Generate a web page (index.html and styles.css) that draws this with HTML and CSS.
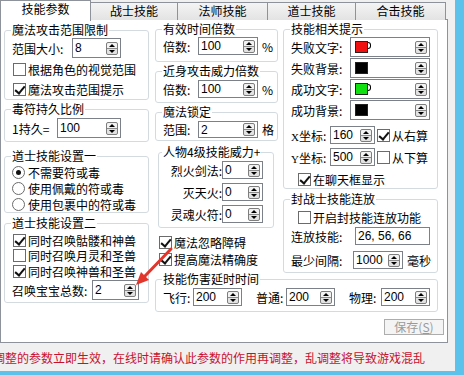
FILE: index.html
```html
<!DOCTYPE html>
<html lang="zh-CN">
<head>
<meta charset="utf-8">
<title>技能参数</title>
<link rel="stylesheet" href="styles.css">
</head>
<body>
<div class="dialog">
  <div class="tabs">
    <div class="tab active t1">技能参数</div>
    <div class="tab t2">战士技能</div>
    <div class="tab t3">法师技能</div>
    <div class="tab t4">道士技能</div>
    <div class="tab t5">合击技能</div>
  </div>

  <div class="panel">
    <div class="grid">
      <!-- left column -->
      <div class="col left">
        <fieldset class="g-l1">
          <legend>魔法攻击范围限制</legend>
          <div class="row h20 mt2"><span class="lbl w61">范围大小:</span><span class="field w49"><span class="val">8</span><span class="spin"></span></span></div>
          <div class="row h22"><span class="box"></span>根据角色的视觉范围</div>
          <div class="row h19"><span class="box on"></span>魔法攻击范围提示</div>
        </fieldset>
        <fieldset class="g-l2">
          <legend>毒符持久比例</legend>
          <div class="row h20 mt3"><span class="lbl w46">1持久=</span><span class="field w64"><span class="val">100</span><span class="spin"></span></span></div>
        </fieldset>
        <fieldset class="g-l3">
          <legend>道士技能设置一</legend>
          <div class="row h16 mt2"><span class="radio on"></span>不需要符或毒</div>
          <div class="row h16"><span class="radio"></span>使用佩戴的符或毒</div>
          <div class="row h16"><span class="radio"></span>使用包裹中的符或毒</div>
        </fieldset>
        <fieldset class="g-l4">
          <legend>道士技能设置二</legend>
          <div class="row h16 mt3"><span class="box on"></span>同时召唤骷髅和神兽</div>
          <div class="row h15"><span class="box"></span>同时召唤月灵和圣兽</div>
          <div class="row h16"><span class="box on"></span>同时召唤神兽和圣兽</div>
          <div class="row h20 mt1"><span class="lbl w81">召唤宝宝总数:</span><span class="field w47"><span class="val">2</span><span class="spin"></span></span></div>
        </fieldset>
      </div>

      <!-- middle column -->
      <div class="col mid">
        <fieldset class="g-m1">
          <legend>有效时间倍数</legend>
          <div class="row h18 mt2"><span class="lbl w36">倍数:</span><span class="field w60"><span class="val">100</span><span class="spin"></span></span><span class="unit">%</span></div>
        </fieldset>
        <fieldset class="g-m2">
          <legend>近身攻击威力倍数</legend>
          <div class="row h18 mt3"><span class="lbl w36">倍数:</span><span class="field w60"><span class="val">100</span><span class="spin"></span></span><span class="unit">%</span></div>
        </fieldset>
        <fieldset class="g-m3">
          <legend>魔法锁定</legend>
          <div class="row h17 mt3"><span class="lbl w36">范围:</span><span class="field w60"><span class="val">2</span><span class="spin"></span></span><span class="unit">格</span></div>
        </fieldset>
        <fieldset class="g-m4">
          <legend>人物4级技能威力+</legend>
          <div class="row h18 mt3"><span class="lbl w60 right">烈火剑法:</span><span class="field w41"><span class="val">0</span><span class="spin"></span></span></div>
          <div class="row h18 mt4"><span class="lbl w60 right">灭天火:</span><span class="field w41"><span class="val">0</span><span class="spin"></span></span></div>
          <div class="row h18 mt4"><span class="lbl w60 right">灵魂火符:</span><span class="field w41"><span class="val">0</span><span class="spin"></span></span></div>
        </fieldset>
        <div class="row h17 mt6 ind2"><span class="box on"></span>魔法忽略障碍</div>
        <div class="row h17 ind2"><span class="box on"></span>提高魔法精确度</div>
      </div>

      <!-- right column -->
      <div class="col right">
        <fieldset class="g-r1">
          <legend>技能相关提示</legend>
          <div class="row h20 mt2"><span class="lbl w60 pl3">失败文字:</span><span class="field color w80"><span class="swatch red"></span><span class="tick"></span><span class="spin"></span></span></div>
          <div class="row h20 mt1"><span class="lbl w60 pl3">失败背景:</span><span class="field color w80"><span class="swatch black"></span><span class="spin"></span></span></div>
          <div class="row h20 mt1"><span class="lbl w60 pl3">成功文字:</span><span class="field color w80"><span class="swatch green"></span><span class="tick"></span><span class="spin"></span></span></div>
          <div class="row h20 mt1"><span class="lbl w60 pl3">成功背景:</span><span class="field color w80"><span class="swatch black"></span><span class="spin"></span></span></div>
          <div class="row h18 mt6"><span class="lbl w40 pl5"><span class="xy">X</span>坐标:</span><span class="field w45"><span class="val">160</span><span class="spin"></span></span><span class="box on ml3"></span>从右算</div>
          <div class="row h18 mt4"><span class="lbl w40 pl5"><span class="xy">Y</span>坐标:</span><span class="field w45"><span class="val">500</span><span class="spin"></span></span><span class="box ml3"></span>从下算</div>
          <div class="row h16 mt5 ind6"><span class="box on"></span>在聊天框显示</div>
        </fieldset>
        <fieldset class="g-r2">
          <legend>封战士技能连放</legend>
          <div class="row h17 mt4 ind6"><span class="box"></span>开启封技能连放功能</div>
          <div class="row h18 mt1"><span class="lbl w65 pl2">连放技能:</span><span class="field w75"><span class="val">26, 56, 66</span></span></div>
          <div class="row h18 mt6"><span class="lbl w63 pl2">最少间隔:</span><span class="field w50"><span class="val">1000</span><span class="spin"></span></span><span class="unit ml5">毫秒</span></div>
        </fieldset>
      </div>

      <!-- wide bottom group -->
      <fieldset class="wide">
        <legend>技能伤害延时时间</legend>
        <div class="row h18 mt3">
          <span class="lbl w31 pl3">飞行:</span><span class="field w49"><span class="val">200</span><span class="spin"></span></span>
          <span class="lbl w31 ml13">普通:</span><span class="field w49"><span class="val">200</span><span class="spin"></span></span>
          <span class="lbl w33 ml13">物理:</span><span class="field w49"><span class="val">200</span><span class="spin"></span></span>
        </div>
      </fieldset>
    </div>

    <div class="actions">
      <button class="save" disabled>保存(<u>S</u>)</button>
    </div>
  </div>

  <div class="notice">调整的参数立即生效，在线时请确认此参数的作用再调整，乱调整将导致游戏混乱</div>

  <svg class="arrow" width="464" height="375" viewBox="0 0 464 375" aria-hidden="true">
    <line x1="171" y1="249" x2="145" y2="276" stroke="#e2352b" stroke-width="3" stroke-linecap="round"/>
    <polygon points="136,285 141,272 149,280" fill="#e2352b"/>
  </svg>
</div>
</body>
</html>
```

FILE: styles.css
```css
* { box-sizing: border-box; }

body {
  margin: 0;
  background: #5bc2ec;
  font-family: "Noto Sans CJK SC", "Noto Sans", sans-serif;
  font-size: 12px;
  color: #000;
}

.dialog {
  position: relative;
  width: 455px;
  height: 371px;
  background: #f0f0f0;
  overflow: hidden;
}

/* ---------- tabs ---------- */
.tabs {
  display: flex;
  align-items: flex-end;
  height: 20px;
}
.tab {
  height: 18px;
  margin-left: -1px;
  border: 1px solid #8e929b;
  border-bottom: none;
  background: linear-gradient(#f4f4f4, #e3e3e3);
  text-align: center;
  line-height: 15px;
}
.tab.active {
  position: relative;
  z-index: 1;
  height: 21px;
  margin-left: 0;
  margin-bottom: -1px;
  background: #fff;
  line-height: 16px;
}
.t1 { width: 91px; }
.t2 { width: 88px; }
.t3 { width: 91px; }
.t4 { width: 89px; }
.t5 { width: 91px; }

/* ---------- panel ---------- */
.panel {
  width: 448px;
  height: 324px;
  margin-top: -1px;
  border: 1px solid #8e929b;
  background: #fff;
  padding: 3px 0 0 3px;
}

.grid {
  display: grid;
  grid-template-columns: 146px 123px 155px;
  column-gap: 5px;
  align-items: start;
}
.col { display: flex; flex-direction: column; }
.col.left { grid-row: 1 / 3; margin-top: 1px; width: 145px; }
.wide { grid-column: 2 / 4; }

fieldset {
  margin: 0;
  min-width: 0;
  padding: 0 4px 0 6px;
  border: 1px solid #d3dbe1;
  border-radius: 3px;
}
legend {
  padding: 0 1px;
  font-size: 12px;
  line-height: 12px;
}

/* group spacing */
.g-l2 { margin-top: 3px; padding-bottom: 3px; }
.g-l3 { margin-top: 8px; }
.g-l4 { margin-top: 4px; padding-bottom: 2px; }
.g-m1 { padding-bottom: 6px; }
.g-m2 { margin-top: 3px; padding-bottom: 4px; }
.g-m3 { margin-top: 3px; padding-bottom: 2px; }
.g-m4 { margin: 5px 4px 0 3px; padding-left: 3px; padding-bottom: 4px; }
.g-r1 { padding-bottom: 1px; }
.g-r2 { margin-top: 4px; padding-bottom: 3px; }
.wide { padding-bottom: 5px; }

/* ---------- rows ---------- */
.row {
  display: flex;
  align-items: center;
  white-space: nowrap;
}
.h15 { height: 15px; }
.h16 { height: 16px; }
.h17 { height: 17px; }
.h18 { height: 18px; }
.h19 { height: 19px; }
.h20 { height: 20px; }
.h22 { height: 22px; }
.mt1 { margin-top: 1px; }
.mt2 { margin-top: 2px; }
.mt3 { margin-top: 3px; }
.mt4 { margin-top: 4px; }
.mt5 { margin-top: 5px; }
.mt6 { margin-top: 6px; }
.ind2 { padding-left: 2px; }
.ind6 { padding-left: 6px; }
.ml3 { margin-left: 3px; }
.ml5 { margin-left: 5px; }
.ml13 { margin-left: 13px; }
.pl2 { padding-left: 2px; }
.pl3 { padding-left: 3px; }
.pl5 { padding-left: 5px; }

.lbl { flex: none; padding-left: 1px; }
.lbl.right { text-align: right; padding-right: 0; }
.w31 { width: 31px; }
.w33 { width: 33px; }
.w36 { width: 36px; }
.w40 { width: 40px; }
.w41 { width: 41px; }
.w45 { width: 45px; }
.w46 { width: 46px; }
.w47 { width: 47px; }
.w49 { width: 49px; }
.w50 { width: 50px; }
.w60 { width: 60px; }
.w61 { width: 61px; }
.w63 { width: 63px; }
.w64 { width: 64px; }
.w65 { width: 65px; }
.w75 { width: 75px; }
.w80 { width: 80px; }
.w81 { width: 81px; }

.xy { font-family: "Liberation Serif", serif; font-size: 11px; }

.unit { margin-left: 4px; }

/* ---------- inputs ---------- */
.field {
  flex: none;
  display: flex;
  align-items: center;
  height: 100%;
  border: 1px solid #7c8088;
  background: #fff;
  padding-left: 2px;
  font-family: "Liberation Sans", Arial, sans-serif;
  font-size: 12px;
}
.field .val { flex: 1; }
.field.color { padding-left: 4px; }

.spin {
  position: relative;
  flex: none;
  width: 12px;
  height: 13px;
  margin-left: auto;
  margin-right: 2px;
  border: 1px solid #7d7d7d;
  border-radius: 2px;
  background: linear-gradient(#f2f2f2 0 5px, #8a8a8a 5px 6px, #e2e2e2 6px);
}
.spin::before,
.spin::after {
  content: "";
  position: absolute;
  left: 2px;
  border-left: 3px solid transparent;
  border-right: 3px solid transparent;
}
.spin::before { top: 1px; border-bottom: 3px solid #000; }
.spin::after { top: 7px; border-top: 3px solid #000; }

.swatch {
  flex: none;
  width: 13px;
  height: 12px;
  border: 1px solid #222;
}
.swatch.red { background: #f01010; }
.swatch.green { background: #10e010; }
.swatch.black { background: #000; }
.tick {
  flex: none;
  width: 3px;
  height: 7px;
  margin-top: -4px;
  border: 1px solid #000;
  border-left: none;
  border-radius: 0 3px 3px 0;
}

/* ---------- check / radio ---------- */
.box {
  position: relative;
  flex: none;
  width: 13px;
  height: 13px;
  margin: 0 2px 0 2px;
  border: 1px solid #6b6b6b;
  background: #fff;
}
.box.on::after {
  content: "";
  position: absolute;
  left: 3px;
  top: 0;
  width: 4px;
  height: 8px;
  border-right: 2px solid #111;
  border-bottom: 2px solid #111;
  transform: rotate(40deg);
}
.radio {
  position: relative;
  flex: none;
  width: 13px;
  height: 13px;
  margin: 0 3px 0 1px;
  border: 1px solid #6b6b6b;
  border-radius: 50%;
  background: #fff;
}
.radio.on::after {
  content: "";
  position: absolute;
  left: 3px;
  top: 3px;
  width: 5px;
  height: 5px;
  border-radius: 50%;
  background: #111;
}

/* ---------- actions ---------- */
.actions {
  display: flex;
  justify-content: flex-end;
  margin-top: 7px;
  padding-right: 3px;
}
.save {
  width: 60px;
  height: 16px;
  padding: 0;
  border: 1px solid #adadad;
  background: #f4f4f4;
  color: #9a9a9a;
  font-family: "Noto Sans CJK SC", sans-serif;
  font-size: 12px;
  line-height: 14px;
}

/* ---------- notice ---------- */
.notice {
  margin: 8px 0 0 -7px;
  color: #c8102e;
  font-size: 12px;
  line-height: 14px;
  white-space: nowrap;
}

.arrow {
  position: absolute;
  left: 0;
  top: 0;
  pointer-events: none;
}
```
